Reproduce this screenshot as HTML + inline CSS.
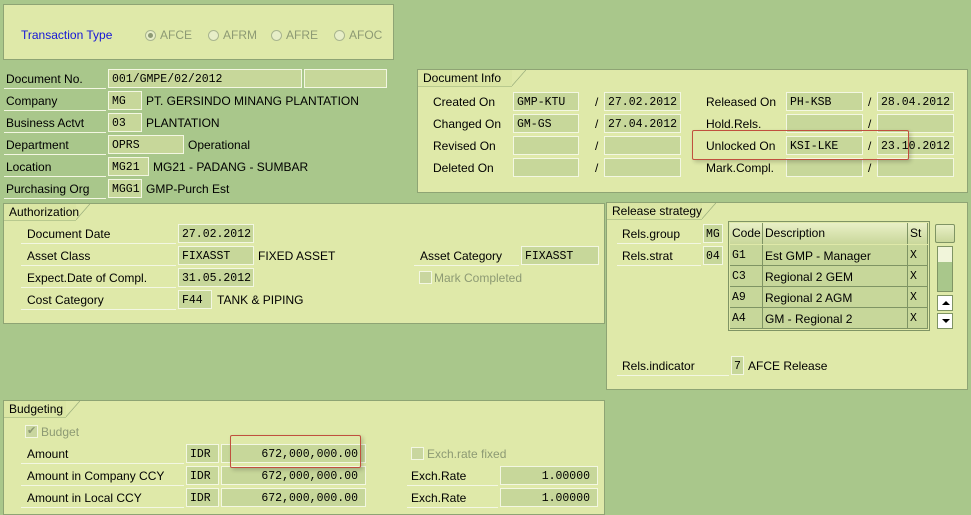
<!DOCTYPE html>
<html><head><meta charset="utf-8"><style>
body{margin:0;width:971px;height:510px;overflow:hidden;background:#a9c78b;font-family:"Liberation Sans",sans-serif;font-size:12px;color:#000;position:relative}
div,span{position:absolute;box-sizing:border-box}
.pn{background:#dfe9a9;border:1px solid #8ea474}
.tab{background:#dbe6a4;border-bottom:1px solid #b8c98e;height:17px;padding:1px 0 0 5px;white-space:nowrap}
.tab:after{content:"";position:absolute;right:-14px;top:0;width:14px;height:16px;background:linear-gradient(to top left,transparent 48%,#8ea474 50%,transparent 54%)}
.f{background:#c7d79a;border:1px solid #f3f7e2;height:19px;font-family:"Liberation Mono",monospace;font-size:11.5px;padding:3px 0 0 3px;line-height:13px;white-space:nowrap}
.r{text-align:right;padding-right:7px}
.l{border-bottom:1px solid #f3f7e2;height:20px;padding-top:3px;white-space:nowrap}
.t{white-space:nowrap}
.g{color:#8d9a74;white-space:nowrap}
.rad{width:11px;height:11px;border-radius:50%;border:1px solid #a9b58f;background:#e7eec8}
.cb{width:13px;height:13px;border:1px solid #f3f7e2;background:#c9d69f}
.red{border:1.5px solid #c0503e;border-radius:2px;box-shadow:2px 2px 4px rgba(0,0,0,.2)}
.th{background:linear-gradient(#e9f0c6,#c9d79b);border-right:1px solid #7f9464;height:21px;padding:3px 0 0 2px;font-size:12px}
.td{border-right:1px solid #7f9464;border-bottom:1px solid #7f9464;height:21px;padding:4px 0 0 2px;background:#c7d79a}
.mono{font-family:"Liberation Mono",monospace;font-size:11.5px}
</style></head><body>

<div class="pn" style="left:3px;top:4px;width:391px;height:56px"></div>
<span class="t" style="left:21px;top:28px;color:#1515d8">Transaction Type</span>
<div class="rad" style="left:145px;top:30px"><div style="left:2px;top:2px;width:5px;height:5px;border-radius:50%;background:#8d9a74"></div></div>
<span class="g" style="left:160px;top:28px">AFCE</span>
<div class="rad" style="left:208px;top:30px"></div><span class="g" style="left:223px;top:28px">AFRM</span>
<div class="rad" style="left:271px;top:30px"></div><span class="g" style="left:286px;top:28px">AFRE</span>
<div class="rad" style="left:334px;top:30px"></div><span class="g" style="left:349px;top:28px">AFOC</span>

<div class="l" style="left:4px;top:69px;width:102px;padding-left:2px">Document No.</div>
<div class="f" style="left:108px;top:69px;width:194px">001/GMPE/02/2012</div>
<div class="f" style="left:304px;top:69px;width:83px"></div>
<div class="l" style="left:4px;top:91px;width:102px;padding-left:2px">Company</div>
<div class="f" style="left:108px;top:91px;width:34px">MG</div><span class="t" style="left:146px;top:94px">PT. GERSINDO MINANG PLANTATION</span>
<div class="l" style="left:4px;top:113px;width:102px;padding-left:2px">Business Actvt</div>
<div class="f" style="left:108px;top:113px;width:34px">03</div><span class="t" style="left:146px;top:116px">PLANTATION</span>
<div class="l" style="left:4px;top:135px;width:102px;padding-left:2px">Department</div>
<div class="f" style="left:108px;top:135px;width:76px">OPRS</div><span class="t" style="left:188px;top:138px">Operational</span>
<div class="l" style="left:4px;top:157px;width:102px;padding-left:2px">Location</div>
<div class="f" style="left:108px;top:157px;width:41px">MG21</div><span class="t" style="left:153px;top:160px">MG21 - PADANG - SUMBAR</span>
<div class="l" style="left:4px;top:179px;width:102px;padding-left:2px">Purchasing Org</div>
<div class="f" style="left:108px;top:179px;width:34px">MGG1</div><span class="t" style="left:146px;top:182px">GMP-Purch Est</span>

<div class="pn" style="left:417px;top:69px;width:551px;height:124px"></div>
<div class="tab" style="left:418px;top:70px;width:94px">Document Info</div>
<span class="t" style="left:433px;top:95px">Created On</span>
<span class="t" style="left:433px;top:117px">Changed On</span>
<span class="t" style="left:433px;top:139px">Revised On</span>
<span class="t" style="left:433px;top:161px">Deleted On</span>
<div class="f" style="left:513px;top:92px;width:66px">GMP-KTU</div><span class="t" style="left:595px;top:95px">/</span><div class="f" style="left:604px;top:92px;width:77px">27.02.2012</div>
<div class="f" style="left:513px;top:114px;width:66px">GM-GS</div><span class="t" style="left:595px;top:117px">/</span><div class="f" style="left:604px;top:114px;width:77px">27.04.2012</div>
<div class="f" style="left:513px;top:136px;width:66px"></div><span class="t" style="left:595px;top:139px">/</span><div class="f" style="left:604px;top:136px;width:77px"></div>
<div class="f" style="left:513px;top:158px;width:66px"></div><span class="t" style="left:595px;top:161px">/</span><div class="f" style="left:604px;top:158px;width:77px"></div>
<span class="t" style="left:706px;top:95px">Released On</span>
<span class="t" style="left:706px;top:117px">Hold.Rels.</span>
<span class="t" style="left:706px;top:139px">Unlocked On</span>
<span class="t" style="left:706px;top:161px">Mark.Compl.</span>
<div class="f" style="left:786px;top:92px;width:77px">PH-KSB</div><span class="t" style="left:868px;top:95px">/</span><div class="f" style="left:877px;top:92px;width:77px">28.04.2012</div>
<div class="f" style="left:786px;top:114px;width:77px"></div><span class="t" style="left:868px;top:117px">/</span><div class="f" style="left:877px;top:114px;width:77px"></div>
<div class="f" style="left:786px;top:136px;width:77px">KSI-LKE</div><span class="t" style="left:868px;top:139px">/</span><div class="f" style="left:877px;top:136px;width:77px">23.10.2012</div>
<div class="f" style="left:786px;top:158px;width:77px"></div><span class="t" style="left:868px;top:161px">/</span><div class="f" style="left:877px;top:158px;width:77px"></div>
<div class="red" style="left:692px;top:130px;width:217px;height:30px"></div>

<div class="pn" style="left:3px;top:203px;width:602px;height:121px"></div>
<div class="tab" style="left:4px;top:204px;width:72px">Authorization</div>
<div class="l" style="left:21px;top:224px;width:155px;padding-left:6px">Document Date</div>
<div class="l" style="left:21px;top:246px;width:155px;padding-left:6px">Asset Class</div>
<div class="l" style="left:21px;top:268px;width:155px;padding-left:6px">Expect.Date of Compl.</div>
<div class="l" style="left:21px;top:290px;width:155px;padding-left:6px">Cost Category</div>
<div class="f" style="left:178px;top:224px;width:76px">27.02.2012</div>
<div class="f" style="left:178px;top:246px;width:76px">FIXASST</div><span class="t" style="left:258px;top:249px">FIXED ASSET</span>
<div class="f" style="left:178px;top:268px;width:76px">31.05.2012</div>
<div class="f" style="left:178px;top:290px;width:34px">F44</div><span class="t" style="left:217px;top:293px">TANK &amp; PIPING</span>
<div class="l" style="left:414px;top:246px;width:105px;padding-left:6px">Asset Category</div>
<div class="f" style="left:521px;top:246px;width:78px">FIXASST</div>
<div class="cb" style="left:419px;top:271px"></div><span class="g" style="left:434px;top:271px">Mark Completed</span>

<div class="pn" style="left:606px;top:202px;width:362px;height:188px"></div>
<div class="tab" style="left:607px;top:203px;width:95px">Release strategy</div>
<div class="l" style="left:617px;top:224px;width:84px;padding-left:5px">Rels.group</div>
<div class="f" style="left:703px;top:224px;width:20px;padding-left:2px">MG</div>
<div class="l" style="left:617px;top:246px;width:84px;padding-left:5px">Rels.strat</div>
<div class="f" style="left:703px;top:246px;width:20px;padding-left:2px">04</div>
<div style="left:728px;top:221px;width:202px;height:110px;border:1px solid #7f9464;background:#dfe9a9"></div>
<div class="th" style="left:730px;top:223px;width:33px">Code</div>
<div class="th" style="left:763px;top:223px;width:145px">Description</div>
<div class="th" style="left:908px;top:223px;width:20px">St</div>
<div class="td mono" style="left:730px;top:245px;width:33px">G1</div><div class="td" style="left:763px;top:245px;width:145px">Est GMP - Manager</div><div class="td mono" style="left:908px;top:245px;width:20px">X</div>
<div class="td mono" style="left:730px;top:266px;width:33px">C3</div><div class="td" style="left:763px;top:266px;width:145px">Regional 2 GEM</div><div class="td mono" style="left:908px;top:266px;width:20px">X</div>
<div class="td mono" style="left:730px;top:287px;width:33px">A9</div><div class="td" style="left:763px;top:287px;width:145px">Regional 2 AGM</div><div class="td mono" style="left:908px;top:287px;width:20px">X</div>
<div class="td mono" style="left:730px;top:308px;width:33px">A4</div><div class="td" style="left:763px;top:308px;width:145px">GM - Regional 2</div><div class="td mono" style="left:908px;top:308px;width:20px">X</div>
<div style="left:935px;top:224px;width:20px;height:19px;border:1px solid #7f9464;background:linear-gradient(#e9f0c6,#c9d79b);border-radius:2px"></div>
<div style="left:937px;top:246px;width:16px;height:46px;border:1px solid #7f9464;background:#a9c78b"></div>
<div style="left:938px;top:247px;width:14px;height:15px;background:#f1f5da"></div>
<div style="left:937px;top:295px;width:16px;height:16px;border:1px solid #7f9464;background:#fff"><div style="left:4px;top:5px;width:0;height:0;border-left:4px solid transparent;border-right:4px solid transparent;border-bottom:4px solid #000"></div></div>
<div style="left:937px;top:313px;width:16px;height:16px;border:1px solid #7f9464;background:#fff"><div style="left:4px;top:5px;width:0;height:0;border-left:4px solid transparent;border-right:4px solid transparent;border-top:4px solid #000"></div></div>
<div class="l" style="left:617px;top:356px;width:112px;padding-left:5px">Rels.indicator</div>
<div class="f" style="left:731px;top:356px;width:13px;padding-left:2px">7</div><span class="t" style="left:748px;top:359px">AFCE Release</span>

<div class="pn" style="left:3px;top:400px;width:602px;height:115px"></div>
<div class="tab" style="left:4px;top:401px;width:62px">Budgeting</div>
<div class="cb" style="left:25px;top:425px;color:#8d9a74;font-size:11px;line-height:11px;padding-left:1px">✔</div><span class="g" style="left:41px;top:425px">Budget</span>
<div class="l" style="left:21px;top:444px;width:163px;padding-left:6px">Amount</div>
<div class="l" style="left:21px;top:466px;width:163px;padding-left:6px">Amount in Company CCY</div>
<div class="l" style="left:21px;top:488px;width:163px;padding-left:6px">Amount in Local CCY</div>
<div class="f" style="left:186px;top:444px;width:33px">IDR</div><div class="f r" style="left:221px;top:444px;width:145px">672,000,000.00</div>
<div class="f" style="left:186px;top:466px;width:33px">IDR</div><div class="f r" style="left:221px;top:466px;width:145px">672,000,000.00</div>
<div class="f" style="left:186px;top:488px;width:33px">IDR</div><div class="f r" style="left:221px;top:488px;width:145px">672,000,000.00</div>
<div class="red" style="left:230px;top:435px;width:131px;height:33px"></div>
<div class="cb" style="left:411px;top:447px"></div><span class="g" style="left:427px;top:447px">Exch.rate fixed</span>
<div class="l" style="left:407px;top:466px;width:91px;padding-left:4px">Exch.Rate</div>
<div class="l" style="left:407px;top:488px;width:91px;padding-left:4px">Exch.Rate</div>
<div class="f r" style="left:500px;top:466px;width:98px">1.00000</div>
<div class="f r" style="left:500px;top:488px;width:98px">1.00000</div>
</body></html>
